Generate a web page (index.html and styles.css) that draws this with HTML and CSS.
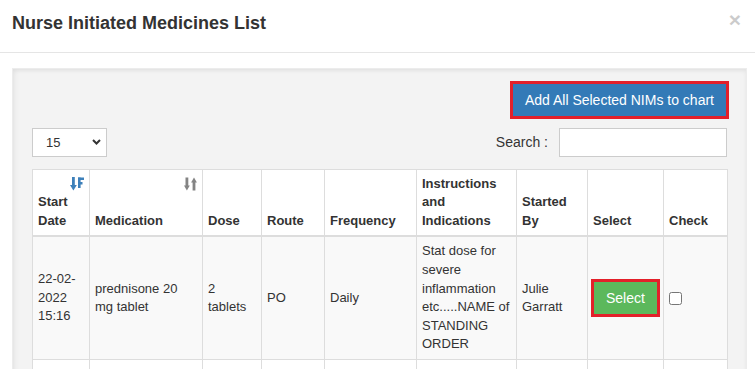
FILE: index.html
```html
<!DOCTYPE html>
<html lang="en">
<head>
  <meta charset="UTF-8" />
  <meta name="viewport" content="width=device-width, initial-scale=1" />
  <title>Nurse Initiated Medicines List</title>
  <link rel="stylesheet" href="styles.css">
</head>
<body>
  <div class="modal">
    <div class="modal-header">
      <h4 class="modal-title">Nurse Initiated Medicines List</h4>
      <button type="button" class="close">&times;</button>
    </div>

    <div class="modal-body">
      <div class="well">
        <div class="toolbar">
          <button type="button" class="btn btn-primary marked">Add All Selected NIMs to chart</button>
        </div>

        <div class="table-controls">
          <div class="length-select">
            <select>
              <option>15</option>
              <option>25</option>
              <option>50</option>
            </select>
            <svg width="9" height="6" viewBox="0 0 9 6"><polyline points="1,1 4.5,4.5 8,1" fill="none" stroke="#333" stroke-width="2"/></svg>
          </div>
          <label class="search">Search : <input type="text" /></label>
        </div>

        <table class="nim-table">
          <colgroup>
            <col style="width:57px">
            <col style="width:113px">
            <col style="width:59px">
            <col style="width:63px">
            <col style="width:92px">
            <col style="width:100px">
            <col style="width:71px">
            <col style="width:76px">
            <col style="width:64px">
          </colgroup>
          <thead>
            <tr>
              <th class="sortable">
                <svg class="sort-icon sorted" width="14" height="14" viewBox="0 0 14 14">
                  <rect x="2" y="0" width="2.8" height="9" />
                  <polygon points="0,8 6.8,8 3.4,13.5" />
                  <rect x="8" y="0.5" width="2.6" height="10.5" />
                  <rect x="8" y="0.5" width="6" height="2.5" />
                  <rect x="8" y="5" width="4.5" height="2.5" />
                </svg>
                Start Date
              </th>
              <th class="sortable">
                <svg class="sort-icon" width="13" height="14" viewBox="0 0 13 14">
                  <rect x="1.5" y="0.5" width="2.8" height="9" />
                  <polygon points="0,8.5 5.8,8.5 2.9,13.5" />
                  <rect x="8.6" y="4.5" width="2.8" height="9" />
                  <polygon points="7.1,5.5 12.9,5.5 10,0.5" />
                </svg>
                Medication
              </th>
              <th>Dose</th>
              <th>Route</th>
              <th>Frequency</th>
              <th>Instructions and Indications</th>
              <th>Started By</th>
              <th>Select</th>
              <th>Check</th>
            </tr>
          </thead>
          <tbody>
            <tr>
              <td>22-02-2022 15:16</td>
              <td>prednisone 20 mg tablet</td>
              <td>2 tablets</td>
              <td>PO</td>
              <td>Daily</td>
              <td>Stat dose for severe inflammation etc.....NAME of STANDING ORDER</td>
              <td>Julie Garratt</td>
              <td><button type="button" class="btn btn-success marked">Select</button></td>
              <td><input type="checkbox" class="check" /></td>
            </tr>
            <tr class="next-row">
              <td></td>
              <td></td>
              <td></td>
              <td></td>
              <td></td>
              <td></td>
              <td></td>
              <td></td>
              <td></td>
            </tr>
          </tbody>
        </table>
      </div>
    </div>
  </div>
</body>
</html>
```

FILE: styles.css
```css
html, body {
  margin: 0;
  padding: 0;
  background: #fff;
  font-family: "Liberation Sans", Arial, sans-serif;
  color: #333;
  overflow: hidden;
}

.modal {
  width: 755px;
}

.modal-header {
  display: flex;
  justify-content: space-between;
  align-items: flex-start;
  padding: 11px 14px 15px 12px;
  border-bottom: 1px solid #e5e5e5;
}

.modal-title {
  margin: 0;
  font-size: 18px;
  font-weight: bold;
  line-height: 1.42857;
  color: #333;
}

.close {
  margin-top: -2px;
  padding: 0;
  border: 0;
  background: none;
  font-family: "Liberation Sans", Arial, sans-serif;
  font-size: 21px;
  font-weight: bold;
  line-height: 1;
  color: #000;
  opacity: 0.2;
  cursor: pointer;
}

.modal-body {
  padding: 15px 8px 0 12px;
}

.well {
  background-color: #f3f3f3;
  border: 1px solid #ececec;
  box-shadow: inset 0 2px 4px rgba(0,0,0,0.06), inset 3px 0 5px rgba(0,0,0,0.03);
  padding: 14px 19px 20px;
  min-height: 320px;
}

.toolbar {
  display: flex;
  justify-content: flex-end;
}

.btn {
  font-family: "Liberation Sans", Arial, sans-serif;
  font-size: 14px;
  line-height: 20px;
  padding: 6px 12px;
  border: 1px solid transparent;
  border-radius: 0;
  color: #fff;
  cursor: pointer;
}

.btn-primary {
  background-color: #337ab7;
  border-color: #2e6da4;
}

.btn-success {
  background-color: #5cb85c;
  border-color: #4cae4c;
}

.marked {
  outline: 3px solid #e3202a;
  outline-offset: -1px;
}

.table-controls {
  display: flex;
  justify-content: space-between;
  align-items: center;
  margin-top: 11px;
}

.length-select {
  display: flex;
  align-items: center;
  box-sizing: border-box;
  width: 75px;
  height: 29px;
  border: 1px solid #ccc;
  background: #fff;
}

.length-select select {
  flex: 1;
  min-width: 0;
  height: 100%;
  appearance: none;
  -webkit-appearance: none;
  border: 0;
  background: transparent;
  padding: 0 0 0 13px;
  font-family: "Liberation Sans", Arial, sans-serif;
  font-size: 13px;
  color: #333;
  outline: none;
}

.length-select svg {
  margin-right: 5px;
}

.search {
  display: flex;
  align-items: center;
  font-size: 14px;
  color: #333;
}

.search input {
  box-sizing: border-box;
  width: 168px;
  height: 29px;
  margin-left: 11px;
  border: 1px solid #ccc;
  padding: 4px 6px;
  font-size: 13px;
}

.nim-table {
  margin-top: 12px;
  width: 695px;
  table-layout: fixed;
  border-collapse: collapse;
  border: 1px solid #ddd;
  font-size: 13px;
  line-height: 1.42857;
}

.nim-table th,
.nim-table td {
  border: 1px solid #ddd;
  padding: 5px;
  text-align: left;
}

.nim-table th {
  position: relative;
  background: #fff;
  font-weight: bold;
  vertical-align: bottom;
  border-bottom-width: 2px;
}

.nim-table td {
  vertical-align: middle;
}

.nim-table tbody tr:nth-child(odd) {
  background: #f9f9f9;
}

.nim-table tbody tr:nth-child(even) {
  background: #fff;
}

.next-row td {
  height: 110px;
}

.sort-icon {
  position: absolute;
  top: 7px;
  right: 5px;
  fill: #333;
  opacity: 0.6;
}

.sort-icon.sorted {
  fill: #337ab7;
  opacity: 0.95;
}

.check {
  margin: 0;
  width: 13px;
  height: 13px;
  vertical-align: middle;
}
```
